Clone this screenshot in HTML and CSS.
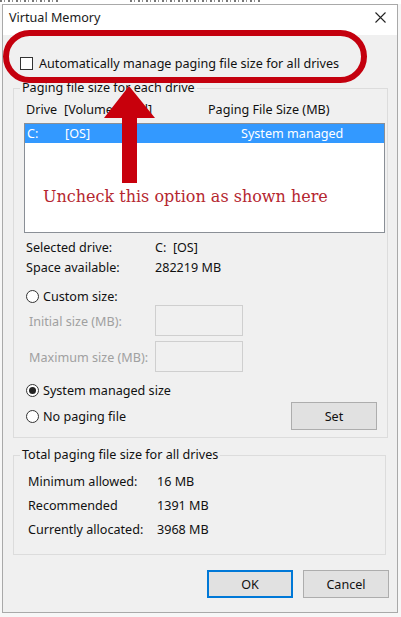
FILE: index.html
```html
<!DOCTYPE html>
<html lang="en">
<head>
<meta charset="utf-8">
<title>Virtual Memory</title>
<link rel="stylesheet" href="styles.css">
</head>
<body>
<div class="strip"><span class="frag frag1"></span><span class="frag frag2"></span></div>
<div class="dialog">
  <div class="titlebar">
    <span class="title">Virtual Memory</span>
    <svg class="close" width="11" height="11" viewBox="0 0 11 11"><path d="M0.5 0.5 L10.5 10.5 M10.5 0.5 L0.5 10.5" stroke="#222" stroke-width="1.1" fill="none"/></svg>
  </div>
  <div class="content">
    <div class="auto"><span class="checkbox"></span><span class="auto-text">Automatically manage paging file size for all drives</span></div>

    <fieldset class="group g1">
      <legend>Paging file size for each drive</legend>
      <div class="listhead"><span class="c-drive">Drive</span><span class="c-vol">[Volume Label]</span><span>Paging File Size (MB)</span></div>
      <div class="listbox">
        <div class="row sel"><span class="c-drive">C:</span><span class="c-vol2">[OS]</span><span>System managed</span></div>
      </div>
      <div class="info">
        <span>Selected drive:</span><span>C:&nbsp; [OS]</span>
        <span>Space available:</span><span>282219 MB</span>
      </div>
      <div class="radio-row custom"><span class="radio"></span><span class="rtext">Custom size:</span></div>
      <div class="field first"><span class="flabel">Initial size (MB):</span><span class="input"></span></div>
      <div class="field"><span class="flabel">Maximum size (MB):</span><span class="input"></span></div>
      <div class="radio-row sysman"><span class="radio on"></span><span class="rtext">System managed size</span></div>
      <div class="nopage">
        <div class="radio-row"><span class="radio"></span><span class="rtext">No paging file</span></div>
        <span class="btn set">Set</span>
      </div>
    </fieldset>

    <fieldset class="group g2">
      <legend>Total paging file size for all drives</legend>
      <div class="totals">
        <span>Minimum allowed:</span><span>16 MB</span>
        <span>Recommended</span><span>1391 MB</span>
        <span>Currently allocated:</span><span>3968 MB</span>
      </div>
    </fieldset>

    <div class="buttons">
      <span class="btn ok">OK</span>
      <span class="btn">Cancel</span>
    </div>
  </div>
</div>

<div class="oval"></div>
<svg class="arrow" width="401" height="200" viewBox="0 0 401 200"><polygon points="129,86 155,118 137,118 137,183 122,183 122,118 104,118" fill="#c8000c"/></svg>
<div class="note">Uncheck this option as shown here</div>
</body>
</html>
```

FILE: styles.css
```css
* { box-sizing: border-box; }

html, body {
  margin: 0;
  padding: 0;
}

body {
  width: 401px;
  height: 617px;
  overflow: hidden;
  background: #f7f7f7;
  font-family: "Segoe UI", "Noto Sans", sans-serif;
  font-size: 12.6px;
  color: #111;
  position: relative;
}

/* cut-off remnants of the window behind the dialog */
.strip {
  height: 4px;
  background: #fff;
  display: flex;
  align-items: flex-start;
}

.frag {
  display: block;
  height: 2px;
  background: repeating-linear-gradient(90deg, #555 0 2px, transparent 2px 4px, #777 4px 5px, transparent 5px 8px);
  opacity: 0.8;
}

.frag1 { width: 60px; }
.frag2 { width: 130px; margin-left: 70px; }

.dialog {
  margin-left: 2px;
  width: 396px;
  height: 609px;
  border: 1px solid #a9a9a9;
  background: #f0f0f0;
}

.titlebar {
  height: 30px;
  background: #fff;
  display: flex;
  align-items: flex-start;
  padding-left: 6px;
}

.title {
  line-height: 16px;
  margin-top: 5px;
  color: #1a1a1a;
}

.close {
  margin-left: auto;
  margin-right: 11px;
  margin-top: 7px;
}

.content {
  padding: 0 10px;
}

.auto {
  display: flex;
  align-items: center;
  height: 13px;
  margin-top: 22px;
  padding-left: 7px;
}

.checkbox {
  width: 13px;
  height: 13px;
  border: 1px solid #333;
  background: #fff;
  margin-right: 6px;
  flex: none;
}

.auto-text { line-height: 13px; white-space: nowrap; }

.group {
  margin: 0;
  padding: 0;
  border: 1px solid #dcdcdc;
  min-width: 0;
}

.group legend {
  margin-left: 6px;
  padding: 0 2px;
  line-height: 16px;
}

.g1 {
  margin-top: 10px;
  padding-bottom: 7px;
  margin-right: -1px;
}

.listhead {
  display: flex;
  line-height: 16px;
  margin-top: 6px;
  padding-left: 12px;
  white-space: nowrap;
}

.c-drive { width: 38px; flex: none; }
.c-vol { width: 144px; flex: none; }
.c-vol2 { width: 176px; flex: none; }

.listbox {
  margin: 5px 2px 0 10px;
  height: 110px;
  border: 1px solid #8a8f96;
  background: #fff;
}

.row {
  display: flex;
  height: 19px;
  line-height: 19px;
  padding-left: 2px;
  white-space: nowrap;
}

.row.sel {
  background: #3399ff;
  color: #fff;
}

.info {
  display: grid;
  grid-template-columns: 129px auto;
  line-height: 20px;
  margin-top: 5px;
  padding-left: 12px;
}

.radio-row {
  display: flex;
  align-items: center;
  height: 13px;
}

.radio {
  width: 13px;
  height: 13px;
  border: 1px solid #333;
  border-radius: 50%;
  background: #fff;
  flex: none;
  margin-right: 4px;
  display: flex;
  align-items: center;
  justify-content: center;
}

.radio.on::after {
  content: "";
  width: 7px;
  height: 7px;
  border-radius: 50%;
  background: #222;
}

.rtext { line-height: 13px; white-space: nowrap; }

.custom {
  margin-top: 12px;
  margin-left: 12px;
}

.field {
  display: flex;
  align-items: center;
  height: 31px;
  margin-top: 5px;
  padding-left: 15px;
}

.field.first { margin-top: 2px; }

.flabel {
  width: 126px;
  flex: none;
  color: #a0a0a0;
  line-height: 16px;
  padding-top: 3px;
}

.input {
  width: 88px;
  height: 31px;
  border: 1px solid #cfcfcf;
  background: #f0f0f0;
}

.sysman {
  margin-top: 12px;
  margin-left: 12px;
}

.nopage {
  display: flex;
  align-items: center;
  height: 28px;
  margin-top: 5px;
  padding-left: 12px;
  padding-right: 10px;
}

.btn {
  display: flex;
  align-items: center;
  justify-content: center;
  width: 86px;
  height: 28px;
  background: #e1e1e1;
  border: 1px solid #adadad;
  color: #111;
}

.set { margin-left: auto; }

.g2 {
  margin-top: 9px;
  margin-right: 1px;
  padding-bottom: 12px;
}

.totals {
  display: grid;
  grid-template-columns: 129px auto;
  line-height: 24px;
  margin-top: 7px;
  padding-left: 14px;
}

.buttons {
  display: flex;
  justify-content: flex-end;
  gap: 10px;
  margin-top: 15px;
  margin-right: -2px;
}

.btn.ok {
  border: 2px solid #0078d7;
}

.oval {
  position: absolute;
  left: 3px;
  top: 30px;
  width: 364px;
  height: 53px;
  border: 6px solid #c4000e;
  border-radius: 27px;
}

.arrow {
  position: absolute;
  left: 0;
  top: 0;
}

.note {
  position: absolute;
  left: 43px;
  top: 187px;
  font-family: "DejaVu Serif", serif;
  font-size: 16px;
  line-height: 20px;
  color: #b5262f;
  white-space: nowrap;
}
```
